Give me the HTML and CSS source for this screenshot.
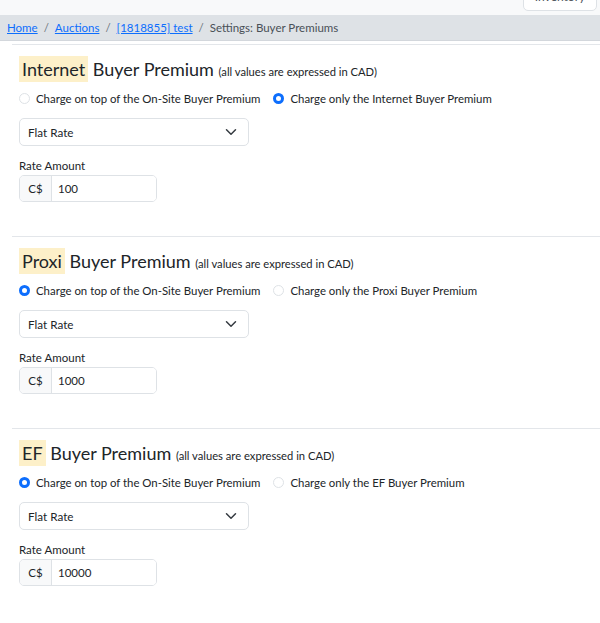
FILE: index.html
```html
<!DOCTYPE html>
<html lang="en">
<head>
    <meta charset="UTF-8">
    <meta name="viewport" content="width=device-width, initial-scale=1.0">
    <title>Settings: Buyer Premiums</title>
    <link rel="stylesheet" href="styles.css">
</head>
<body>
    <nav class="topbar">
        <span class="brand">Demo Seven</span>
        <span class="menu">Lots &#9662;</span>
        <span class="btn-inventory">Inventory</span>
    </nav>

    <ol class="breadcrumb">
        <li><a href="#">Home</a></li>
        <li><a href="#">Auctions</a></li>
        <li><a href="#">[1818855] test</a></li>
        <li class="active">Settings: Buyer Premiums</li>
    </ol>

    <main class="content">
        <section class="premium">
            <h3 class="premium-title"><span class="mark">Internet</span> Buyer Premium <small>(all values are expressed in CAD)</small></h3>
            <div class="radio-row">
                <label class="form-check"><input type="radio" name="internet_mode"> Charge on top of the On-Site Buyer Premium</label>
                <label class="form-check"><input type="radio" name="internet_mode" checked> Charge only the Internet Buyer Premium</label>
            </div>
            <div class="select-wrap">
                <select class="form-select"><option>Flat Rate</option></select>
                <svg class="chevron" width="12" height="8" viewBox="0 0 12 8"><path d="M1.5 1.8 6 6.2 10.5 1.8" fill="none" stroke="#343a40" stroke-width="1.5" stroke-linecap="round" stroke-linejoin="round"/></svg>
            </div>
            <label class="field-label">Rate Amount</label>
            <div class="input-group">
                <span class="prefix">C$</span>
                <input type="text" value="100">
            </div>
        </section>

        <section class="premium">
            <h3 class="premium-title"><span class="mark">Proxi</span> Buyer Premium <small>(all values are expressed in CAD)</small></h3>
            <div class="radio-row">
                <label class="form-check"><input type="radio" name="proxi_mode" checked> Charge on top of the On-Site Buyer Premium</label>
                <label class="form-check"><input type="radio" name="proxi_mode"> Charge only the Proxi Buyer Premium</label>
            </div>
            <div class="select-wrap">
                <select class="form-select"><option>Flat Rate</option></select>
                <svg class="chevron" width="12" height="8" viewBox="0 0 12 8"><path d="M1.5 1.8 6 6.2 10.5 1.8" fill="none" stroke="#343a40" stroke-width="1.5" stroke-linecap="round" stroke-linejoin="round"/></svg>
            </div>
            <label class="field-label">Rate Amount</label>
            <div class="input-group">
                <span class="prefix">C$</span>
                <input type="text" value="1000">
            </div>
        </section>

        <section class="premium">
            <h3 class="premium-title"><span class="mark">EF</span> Buyer Premium <small>(all values are expressed in CAD)</small></h3>
            <div class="radio-row">
                <label class="form-check"><input type="radio" name="ef_mode" checked> Charge on top of the On-Site Buyer Premium</label>
                <label class="form-check"><input type="radio" name="ef_mode"> Charge only the EF Buyer Premium</label>
            </div>
            <div class="select-wrap">
                <select class="form-select"><option>Flat Rate</option></select>
                <svg class="chevron" width="12" height="8" viewBox="0 0 12 8"><path d="M1.5 1.8 6 6.2 10.5 1.8" fill="none" stroke="#343a40" stroke-width="1.5" stroke-linecap="round" stroke-linejoin="round"/></svg>
            </div>
            <label class="field-label">Rate Amount</label>
            <div class="input-group">
                <span class="prefix">C$</span>
                <input type="text" value="10000">
            </div>
        </section>
    </main>
</body>
</html>
```

FILE: styles.css
```css
body {
    font-family: Lato, 'Liberation Sans', sans-serif;
    margin: 0;
    padding: 0;
    background: #ffffff;
    color: #212529;
    overflow: hidden;
}
.topbar {
    height: 15px;
    overflow: hidden;
    background: #f8f9fa;
    display: flex;
    align-items: flex-end;
    padding: 0 3px 0 8px;
}
.brand {
    font-size: 17px;
    font-weight: 700;
    line-height: 20px;
    margin-bottom: 11px;
}
.menu {
    font-size: 13px;
    line-height: 18px;
    color: #adb5bd;
    margin: 0 0 12px 20px;
}
.btn-inventory {
    margin-left: auto;
    margin-bottom: 4px;
    width: 74px;
    height: 30px;
    box-sizing: border-box;
    background: #ffffff;
    border: 1px solid #dee2e6;
    border-radius: 5px;
    font-size: 12px;
    line-height: 13px;
    color: #495057;
    display: flex;
    align-items: flex-end;
    justify-content: center;
    padding-bottom: 7px;
}
.breadcrumb {
    list-style: none;
    margin: 0;
    height: 26px;
    padding: 0 7px;
    background: #dee2e6;
    display: flex;
    align-items: center;
    font-size: 11.5px;
    border-bottom: 1px solid #d3d7dc;
    box-sizing: border-box;
}
.breadcrumb li + li::before {
    content: "/";
    color: #6c757d;
    padding: 0 6px;
}
.breadcrumb a {
    color: #0d6efd;
    text-decoration: underline;
}
.breadcrumb .active {
    color: #495057;
}
.content {
    margin-top: 3px;
    padding-left: 12px;
}
.premium {
    border-top: 1px solid #e3e6ea;
    padding: 11px 0 34px 7px;
}
.premium-title {
    margin: 0;
    height: 26px;
    display: flex;
    align-items: baseline;
    white-space: pre;
    font-size: 18px;
    font-weight: 400;
    line-height: 26px;
    color: #212529;
}
.premium-title .mark {
    background: #fdf0c9;
    padding: 0 3px;
}
.premium-title small {
    font-size: 11.2px;
}
.radio-row {
    margin-top: 7px;
    height: 18px;
    display: flex;
    align-items: center;
    gap: 13px;
    font-size: 11.4px;
}
.form-check {
    display: flex;
    align-items: center;
    gap: 6px;
    color: #212529;
}
.form-check input {
    appearance: none;
    margin: 0;
    width: 11px;
    height: 11px;
    border: 1px solid #dee2e6;
    border-radius: 50%;
    background: #ffffff;
}
.form-check input:checked {
    border: 3.5px solid #0d6efd;
}
.select-wrap {
    position: relative;
    width: 230px;
    margin-top: 11px;
}
.form-select {
    appearance: none;
    width: 100%;
    height: 28px;
    border: 1px solid #dee2e6;
    border-radius: 5px;
    background: #ffffff;
    padding: 0 8px;
    font-family: Lato, sans-serif;
    font-size: 11.7px;
    color: #212529;
}
.chevron {
    position: absolute;
    right: 12px;
    top: 10px;
}
.field-label {
    display: block;
    margin-top: 11px;
    font-size: 11.5px;
    line-height: 18px;
}
.input-group {
    display: flex;
    width: 138px;
    height: 27px;
    border: 1px solid #dee2e6;
    border-radius: 5px;
    box-sizing: border-box;
    overflow: hidden;
}
.prefix {
    width: 31px;
    background: #f8f9fa;
    border-right: 1px solid #dee2e6;
    display: flex;
    align-items: center;
    justify-content: center;
    font-size: 11.5px;
}
.input-group input {
    border: none;
    flex: 1;
    min-width: 0;
    padding: 0 6px;
    font-family: Lato, sans-serif;
    font-size: 11.5px;
    color: #212529;
}
```
